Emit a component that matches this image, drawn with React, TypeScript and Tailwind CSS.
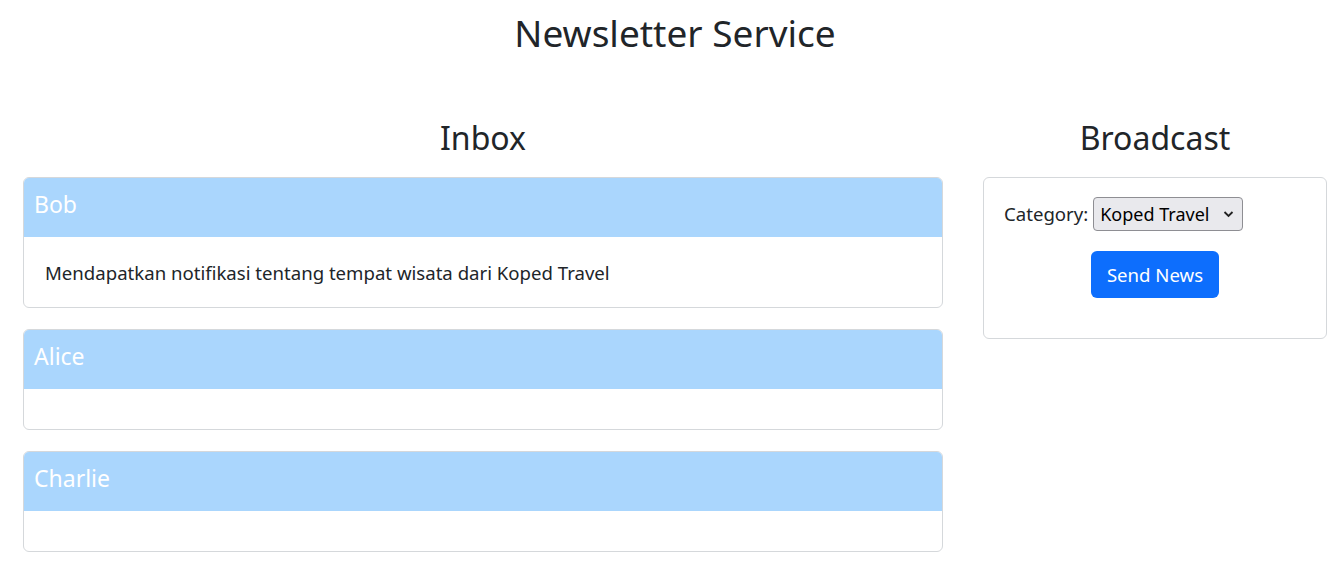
import React from "react";

function InboxCard({ name, message }: { name: string; message?: string }) {
  return (
    <div className="border border-[#d5d8db] rounded-[6px] overflow-hidden bg-white">
      <div className="bg-[#aad6fd] h-[59px] px-[10px] pb-[6px] flex items-center text-white text-[23px]">{name}</div>
      <div className="px-[21px] pt-[21px] pb-[19px] text-[18.6px] leading-[30px] min-h-[40px]">
        {message}
      </div>
    </div>
  );
}

export default function App() {
  return (
    <div className="font-['Noto_Sans',sans-serif] text-[#212529] bg-white min-h-[576px]">
      <h1 className="text-center text-[37px] leading-[48px] pt-[9px] pl-[10px]">Newsletter Service</h1>
      <div className="flex gap-[40px] pl-[23px] mt-[61px]">
        <div className="w-[920px]">
          <h2 className="text-center text-[32px] leading-[40px] mb-[19px]">Inbox</h2>
          <div className="flex flex-col gap-[21px]">
            <InboxCard name="Bob" message="Mendapatkan notifikasi tentang tempat wisata dari Koped Travel" />
            <InboxCard name="Alice" />
            <InboxCard name="Charlie" />
          </div>
        </div>
        <div className="w-[344px]">
          <h2 className="text-center text-[32px] leading-[40px] mb-[19px]">Broadcast</h2>
          <div className="border border-[#d5d8db] rounded-[6px] h-[162px] px-[20px] pt-[19px]">
            <div className="flex items-center gap-[5px] text-[18.6px]">
              <span>Category:</span>
              <div className="h-[34px] w-[150px] border border-[#8e8e93] rounded-[4px] bg-[#e9e9ed] flex items-center justify-between pl-[6px] pr-[8px] text-black">
                <span className="text-[18px]">Koped Travel</span>
                <svg width="11" height="8" viewBox="0 0 11 8" fill="none"><path d="M1.5 2 L5.5 6 L9.5 2" stroke="#222" strokeWidth="1.8" /></svg>
              </div>
            </div>
            <div className="flex justify-center mt-[20px]">
              <button className="bg-[#0d6efd] text-white text-[18.6px] rounded-[6px] h-[47px] px-[16px]">Send News</button>
            </div>
          </div>
        </div>
      </div>
    </div>
  );
}
